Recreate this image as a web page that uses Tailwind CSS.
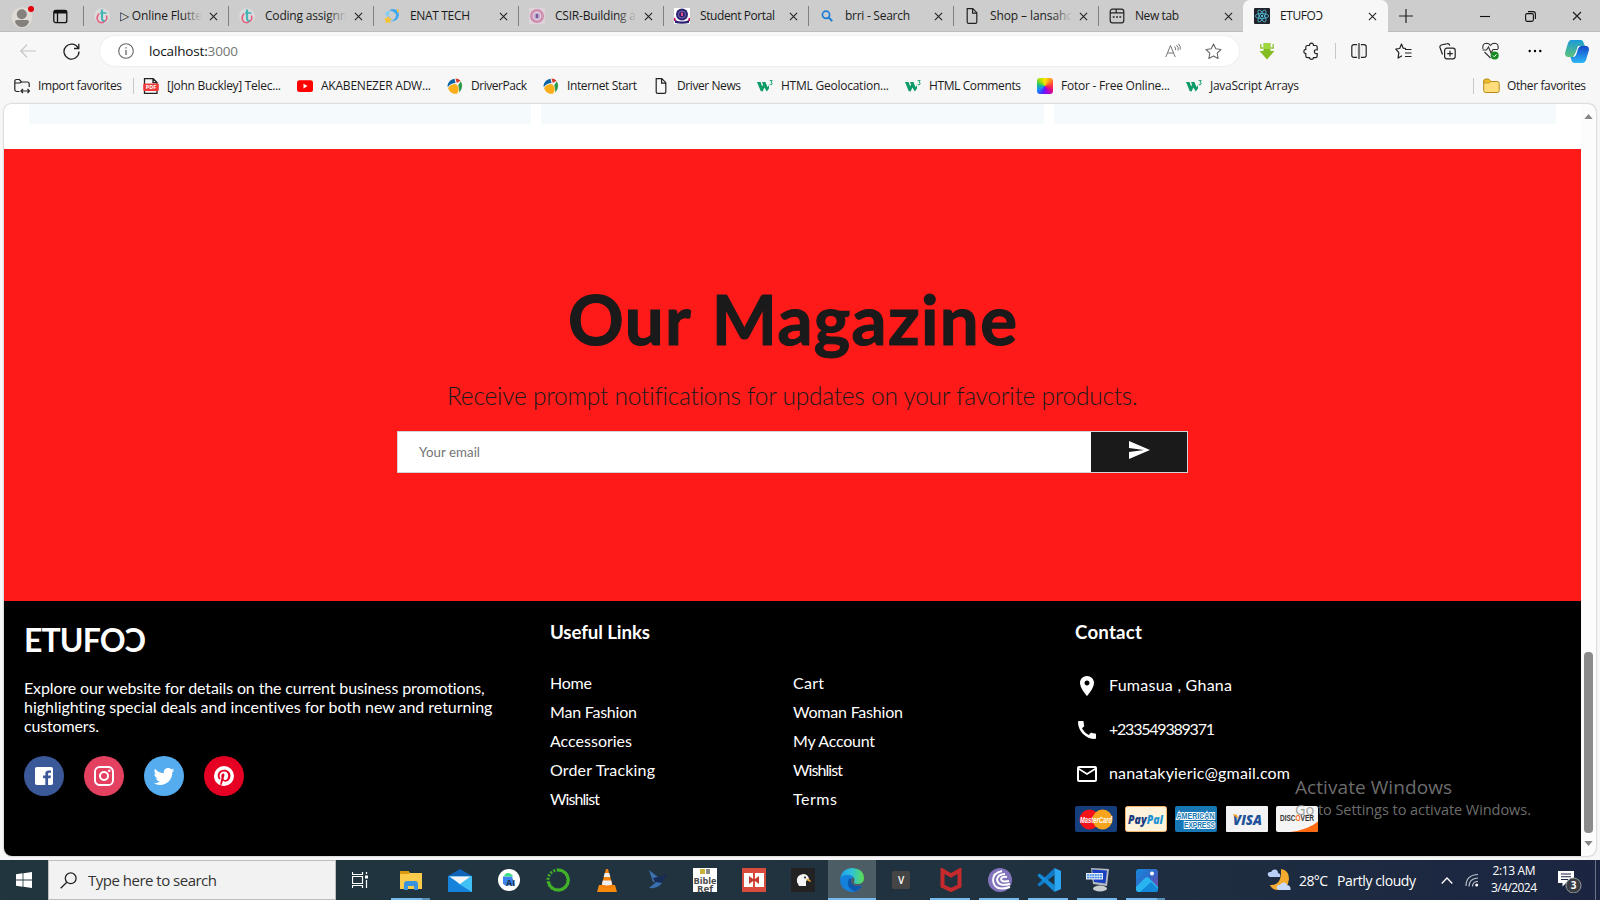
<!DOCTYPE html>
<html lang="en">
<head>
<meta charset="utf-8">
<title>ETUFOƆ</title>
<script src="https://cdn.jsdelivr.net/npm/@tailwindcss/browser@4"></script>
</head>
<body class="w-[1600px] h-[900px] overflow-hidden bg-[#f7f7f7] font-['Open_Sans','Noto_Sans',sans-serif] text-[12px] text-[#1b1b1b] flex flex-col relative">

<svg class="hidden">
  <symbol id="x" viewBox="0 0 10 10"><path d="M1 1l8 8M9 1l-8 8" stroke="#222" stroke-width="1.2" fill="none"/></symbol>
  <symbol id="page" viewBox="0 0 16 16"><path d="M3.2.7h5.6l4 4v9.2q0 1.4-1.4 1.4H4.6q-1.4 0-1.4-1.4zM8.6.9v4.2h4" stroke="#222" stroke-width="1.2" fill="none"/></symbol>
  <symbol id="t" viewBox="0 0 16 16"><circle cx="8" cy="8" r="7.8" fill="#dcdcdc"/><path d="M8 1.500v8.500q0 3.500 3 3" stroke="#45b5b5" stroke-width="2.200" fill="none"/><path d="M6 5h6.500" stroke="#45b5b5" stroke-width="1.600"/><path d="M5 5.500Q1 11 5.500 14.300q3 1 4.500-.6M12.300 7.500q1.600 4-1.600 6" stroke="#e2607f" stroke-width="1.600" fill="none"/></symbol>
  <symbol id="w3" viewBox="0 0 16 16"><path d="M0 4h3.600l1.500 4.500L6 6.500 5 4h3.400l2.200 5.200L12 7v3.500L9.800 13.500 7.400 9.500 5.600 13.500 3.700 13z" fill="#0a9b67"/><path d="M12.600 2.600h2.600l-1.200 1.800q1.600.3 1.100 1.700-.8 1.300-2.500.4" stroke="#0a9b67" stroke-width=".9" fill="none"/></symbol>
  <symbol id="ball" viewBox="0 0 16 16"><path d="M.5 7.500Q2 1.500 7.500.8l1 4.200Q4 5 .8 9z" fill="#0a64a4"/><path d="M8.500.5q3 0 5 2.300L9.800 5z" fill="#d8392b"/><path d="M13.800 3.300Q17 9 12.500 14.500L11.300 7z" fill="#2c9a4b"/><path d="M1 10Q5 5 9.500 6.200q3.500 4 1 9.300Q3.500 17 1 10z" fill="#f9ae1a"/></symbol>
</svg>

<!-- Tab strip -->
<div class="h-8 shrink-0 bg-[#cdcdcd] flex items-stretch shadow-[inset_0_-1px_0_#bdbdbd]">
  <div class="w-[83px] flex items-center pl-[11px] gap-[19px]">
    <svg class="w-[23px] h-[23px]" viewBox="0 0 23 23"><circle cx="11" cy="12.500" r="10.300" fill="#dedad4"/><circle cx="10.800" cy="9.300" r="5" fill="#85807b"/><path d="M4 17q0-2 2-2h10q2 0 2 2-2 5-7 5t-7-5z" fill="#85807b"/><circle cx="20" cy="4" r="3" fill="#e3000b"/></svg>
    <svg class="w-[15px] h-[15px]" viewBox="0 0 15 15"><rect x=".8" y="1.300" width="13" height="12.400" rx="2" fill="none" stroke="#111" stroke-width="1.300"/><path d="M1 3h13" stroke="#111" stroke-width="3"/><path d="M4.500 3v11" stroke="#111" stroke-width="1.300"/></svg>
  </div>
  <div class="w-[145px] flex items-center relative pl-[11px]"><i class="absolute left-0 top-[6px] w-px h-5 bg-[#808080]"></i>
    <svg class="w-4 h-4 shrink-0"><use href="#t"/></svg><div class="ml-[10px] w-[82px] overflow-hidden relative whitespace-nowrap"><span class="fit block w-[82px]">▷ Online Flutte</span><i class="absolute right-0 top-0 w-5 h-full bg-linear-to-r from-transparent to-[#cdcdcd]"></i></div><svg class="w-[9px] h-[9px] ml-[7px] shrink-0"><use href="#x"/></svg></div>
  <div class="w-[145px] flex items-center relative pl-[11px]"><i class="absolute left-0 top-[6px] w-px h-5 bg-[#808080]"></i>
    <svg class="w-4 h-4 shrink-0"><use href="#t"/></svg><div class="ml-[10px] w-[82px] overflow-hidden relative whitespace-nowrap"><span class="fit block w-[82px]">Coding assignn</span><i class="absolute right-0 top-0 w-5 h-full bg-linear-to-r from-transparent to-[#cdcdcd]"></i></div><svg class="w-[9px] h-[9px] ml-[7px] shrink-0"><use href="#x"/></svg></div>
  <div class="w-[145px] flex items-center relative pl-[11px]"><i class="absolute left-0 top-[6px] w-px h-5 bg-[#808080]"></i>
    <svg class="w-4 h-4 shrink-0" viewBox="0 0 16 16"><path d="M5 2.500q5-3 9 .5 2.500 5-1.500 9-4 2-6 1 4.500-1 5.500-5Q12.500 4 5 2.500z" fill="#3fa9ef"/><path d="M1 5q2-2.500 6-2.500Q4.500 5 5 8q2 4 6 4.500-7 1-10-7.500z" fill="#86cdf2"/><path d="M4 8l1.300 2.300 2.700.4-2 2 .5 2.700L4 14l-2.500 1.400.5-2.700-2-2 2.700-.4zM13 0l.7 1.700 1.800.3-1.300 1.200.3 1.800-1.500-1z" fill="#fbc02d"/></svg><div class="ml-[10px] w-[82px]"><span class="fit block w-[60px]">ENAT TECH</span></div><svg class="w-[9px] h-[9px] ml-[7px] shrink-0"><use href="#x"/></svg></div>
  <div class="w-[145px] flex items-center relative pl-[11px]"><i class="absolute left-0 top-[6px] w-px h-5 bg-[#808080]"></i>
    <svg class="w-4 h-4 shrink-0" viewBox="0 0 16 16"><path d="M0 0h16v16H0z" fill="#dfd3da"/><circle cx="8" cy="8" r="5.700" fill="none" stroke="#cf8db2" stroke-width="2.600"/><circle cx="8" cy="8" r="3" fill="#b9a0c8"/><path d="M7 6h2v4H7z" fill="#7c5a9a"/></svg><div class="ml-[10px] w-[82px] overflow-hidden relative whitespace-nowrap"><span class="fit block w-[81px]">CSIR-Building a</span><i class="absolute right-0 top-0 w-5 h-full bg-linear-to-r from-transparent to-[#cdcdcd]"></i></div><svg class="w-[9px] h-[9px] ml-[7px] shrink-0"><use href="#x"/></svg></div>
  <div class="w-[145px] flex items-center relative pl-[11px]"><i class="absolute left-0 top-[6px] w-px h-5 bg-[#808080]"></i>
    <svg class="w-4 h-4 shrink-0" viewBox="0 0 16 16"><path d="M0 0h16v16H0z" fill="#fff"/><circle cx="8" cy="6.500" r="6" fill="#2d2172"/><circle cx="8" cy="6.500" r="3.600" fill="none" stroke="#8a7fc0" stroke-width=".8"/><path d="M7 4.500h2v3.500H7z" fill="#e7528b"/><path d="M1 12q7 3 14 0v3q-7 1.500-14 0z" fill="#2d2172"/><path d="M0 9.500l2 1.500-1 2H0zM16 9.500L14 11l1 2h1z" fill="#d4006a"/></svg><div class="ml-[10px] w-[82px]"><span class="fit block w-[75px]">Student Portal</span></div><svg class="w-[9px] h-[9px] ml-[7px] shrink-0"><use href="#x"/></svg></div>
  <div class="w-[145px] flex items-center relative pl-[11px]"><i class="absolute left-0 top-[6px] w-px h-5 bg-[#808080]"></i>
    <svg class="w-4 h-4 shrink-0" viewBox="0 0 16 16"><circle cx="7" cy="6.800" r="3.600" fill="none" stroke="#1b7cd6" stroke-width="1.700"/><path d="M9.600 9.400l3.600 3.700" stroke="#1b7cd6" stroke-width="2"/></svg><div class="ml-[10px] w-[82px]"><span class="fit block w-[65px]">brri - Search</span></div><svg class="w-[9px] h-[9px] ml-[7px] shrink-0"><use href="#x"/></svg></div>
  <div class="w-[145px] flex items-center relative pl-[11px]"><i class="absolute left-0 top-[6px] w-px h-5 bg-[#808080]"></i>
    <svg class="w-4 h-4 shrink-0"><use href="#page"/></svg><div class="ml-[10px] w-[82px] overflow-hidden relative whitespace-nowrap"><span class="fit block w-[82px]">Shop – lansahc</span><i class="absolute right-0 top-0 w-5 h-full bg-linear-to-r from-transparent to-[#cdcdcd]"></i></div><svg class="w-[9px] h-[9px] ml-[7px] shrink-0"><use href="#x"/></svg></div>
  <div class="w-[145px] flex items-center relative pl-[11px]"><i class="absolute left-0 top-[6px] w-px h-5 bg-[#808080]"></i>
    <svg class="w-4 h-4 shrink-0" viewBox="0 0 16 16"><path d="M1.200 12.400V3.600Q1.200 1.200 3.600 1.200h8.800q2.400 0 2.400 2.400v8.800q0 2.400-2.400 2.400H3.600q-2.400 0-2.400-2.400zM1.200 4.800h5Q7.200 4.800 7.200 3.500V1.200M7.200 4.800h7.600" fill="none" stroke="#222" stroke-width="1.200"/><path d="M3.800 9h1.800M7.100 9h1.800M10.400 9h1.800" stroke="#222" stroke-width="1.600"/></svg><div class="ml-[10px] w-[82px]"><span class="fit block w-[44px]">New tab</span></div><svg class="w-[9px] h-[9px] ml-[7px] shrink-0"><use href="#x"/></svg></div>
  <div class="w-[145px] flex items-center bg-[#f7f7f7] rounded-t-[7px] pl-[11px]">
    <svg class="w-4 h-4 shrink-0" viewBox="0 0 16 16"><rect width="16" height="16" rx="1" fill="#20232a"/><g fill="none" stroke="#53c1de" stroke-width=".8"><ellipse cx="8" cy="8" rx="6.700" ry="2.500"/><ellipse cx="8" cy="8" rx="6.700" ry="2.500" transform="rotate(60 8 8)"/><ellipse cx="8" cy="8" rx="6.700" ry="2.500" transform="rotate(120 8 8)"/></g><circle cx="8" cy="8" r="1.200" fill="#53c1de"/></svg><div class="ml-[10px] w-[82px]"><span class="fit block w-[43px]">ETUFOƆ</span></div><svg class="w-[9px] h-[9px] ml-[6px] shrink-0"><use href="#x"/></svg></div>
  <div class="flex-1 flex items-center pl-[11px]">
    <svg class="w-[14px] h-[14px]" viewBox="0 0 14 14"><path d="M7 0v14M0 7h14" stroke="#222" stroke-width="1.200"/></svg>
    <svg class="w-[10px] h-[10px] ml-[67px]" viewBox="0 0 10 10"><path d="M0 5.500h10" stroke="#111" stroke-width="1.100"/></svg>
    <svg class="w-[11px] h-[11px] ml-[35px]" viewBox="0 0 11 11"><rect x=".6" y="2.600" width="7.800" height="7.800" rx="1.600" fill="none" stroke="#111" stroke-width="1.100"/><path d="M3 .6h5q2.400 0 2.400 2.400v5" fill="none" stroke="#111" stroke-width="1.100"/></svg>
    <svg class="w-[10px] h-[10px] ml-[36px]"><use href="#x"/></svg>
  </div>
</div>

<!-- Address bar -->
<div class="h-[38px] shrink-0 flex items-center">
  <svg class="w-4 h-[14px] ml-5" viewBox="0 0 16 14"><path d="M7 .7L.8 7 7 13.300M.8 7H16" fill="none" stroke="#c3c3c3" stroke-width="1.200"/></svg>
  <svg class="w-[17px] h-[17px] ml-[27px]" viewBox="0 0 17 17"><path d="M15.300 5.400A7.500 7.500 0 1 0 16 8.500M15.800.8v4.700H11" fill="none" stroke="#222" stroke-width="1.300"/></svg>
  <div class="ml-5 w-[1139px] h-[30px] rounded-full bg-white flex items-center shadow-[0_0_2px_#ddd]">
    <svg class="w-4 h-4 ml-[18px]" viewBox="0 0 16 16"><circle cx="8" cy="8" r="7.300" fill="none" stroke="#666" stroke-width="1.100"/><path d="M8 7v5M8 4.200v1.400" stroke="#666" stroke-width="1.300"/></svg>
    <span class="fit block w-[89px] ml-[15px] text-[13.500px] text-[#111]">localhost:<b class="font-normal text-[#767676]">3000</b></span>
    <svg class="w-4 h-4 ml-auto" viewBox="0 0 16 16"><path d="M.8 14L5.500 2.500 10.200 14M2.400 10h6.200M9.500 3.500q1.500 1.500 1 3.500M11.500 2q2.500 2.500 1.500 5.500M13.500.7q2.500 3 1.700 6" fill="none" stroke="#767676" stroke-width="1"/></svg>
    <svg class="w-[17px] h-[17px] ml-[24px] mr-[17px]" viewBox="0 0 17 17"><path d="M8.500 1l2.300 4.800 5.200.7-3.800 3.700.9 5.300-4.600-2.500-4.600 2.500.9-5.300L1 6.500l5.200-.7z" fill="none" stroke="#6a6a6a" stroke-width="1.100" stroke-linejoin="round"/></svg>
  </div>
  <svg class="w-4 h-[18px] ml-5" viewBox="0 0 16 18"><path d="M4.500 1h7v8h4L8 17.500.5 9h4z" fill="#84bd22"/><path d="M5 1h6v6H5z" fill="#9fd63c"/><path d="M1.800 2v4h2.500M14.200 2v4h-2.500" fill="none" stroke="#8bc52e" stroke-width="1.300"/></svg>
  <svg class="w-4 h-[18px] ml-[28px]" viewBox="0 0 16 18"><path d="M4.500 3.500h2Q6.300 1.200 8.500 1.200t2 2.300h2q1.700 0 1.700 1.700v2.600q-2.800-.4-2.800 1.900t2.800 1.900V14q0 1.600-1.700 1.600h-2Q10.300 17.300 8.500 17.300T6.500 15.600h-2Q2.800 15.600 2.800 14v-2.400Q.8 11.400.8 9.500t2-2.100V5.200q0-1.700 1.700-1.700z" fill="none" stroke="#222" stroke-width="1.200"/></svg>
  <i class="w-px h-4 bg-[#c8c8c8] ml-4"></i>
  <svg class="w-4 h-4 ml-[15px]" viewBox="0 0 16 16"><path d="M5.500 1.700H3Q.8 1.700.8 3.800v8.400q0 2.100 2.200 2.100h2.500M10.500 1.700H13q2.200 0 2.200 2.100v8.400q0 2.100-2.200 2.100h-2.500M5.500 1.100v13.800M10.500 1.100v13.800" fill="none" stroke="#222" stroke-width="1.200"/><path d="M4.800 2.300h1.400v11.400H4.800zM9.800 2.300h1.400v11.400H9.800z" fill="#f7f7f7"/><path d="M8 0v16" stroke="#222" stroke-width="1.200"/></svg>
  <svg class="w-[17px] h-[17px] ml-[28px]" viewBox="0 0 17 17"><path d="M11 5.500l-2.800-.3L6.500 1 4.700 5.500.8 6l3 3.700-.7 5.400L7 12.800M10 6.500h6.500M10 10h6.500M10 13.500h6.500" fill="none" stroke="#222" stroke-width="1.200" stroke-linejoin="round"/></svg>
  <svg class="w-[17px] h-[17px] ml-[27px]" viewBox="0 0 17 17"><rect x="5.600" y="5.200" width="10.600" height="10.600" rx="2.200" fill="none" stroke="#222" stroke-width="1.200"/><path d="M3.500 11.500L1 4.500Q.5 2.700 2.200 2l6-1.300q2-.5 2.500 2M11 7.800v5.600M8.200 10.600h5.600" fill="none" stroke="#222" stroke-width="1.200"/></svg>
  <svg class="w-[17px] h-[18px] ml-[26px]" viewBox="0 0 17 18"><path d="M1 7Q0 1.500 4.500 1.300 7 1.300 8.500 3.500 10 1.300 12.500 1.300 17 1.500 16 7M2.500 10l6 6M.5 8h4L6.500 5l2.500 6 2-3.500h5" fill="none" stroke="#333" stroke-width="1.100"/><circle cx="12.700" cy="13.500" r="4" fill="#168a22"/><path d="M11 13.500l1.300 1.300 2.200-2.500" stroke="#fff" fill="none"/></svg>
  <svg class="w-[14px] h-4 ml-[29px]" viewBox="0 0 14 16"><circle cx="1.700" cy="8" r="1.200"/><circle cx="7" cy="8" r="1.200"/><circle cx="12.300" cy="8" r="1.200"/></svg>
  <svg class="w-[24px] h-[23px] ml-[23px]" viewBox="0 0 24 23"><defs><linearGradient id="ca" x2="0" y2="1"><stop stop-color="#1b9bd8"/><stop offset="1" stop-color="#5cc27a"/></linearGradient><linearGradient id="cb" x2="0" y2="1"><stop stop-color="#1447c9"/><stop offset="1" stop-color="#2db8f5"/></linearGradient></defs><path d="M6 0h10q2 0 2.700 3L20 6h-4q-2 0-3 3l-2 6q-1 2-3 2H3q-3 0-3-4L3 3q1-3 3-3z" fill="url(#ca)"/><path d="M18 23H9q-2 0-2.700-3L5.500 17H8q2 0 3-3l2-6q1-2 3-2h5q3 0 3 4l-3 10q-1 3-3 3z" fill="url(#cb)"/><path d="M13 6h3q-2 0-3 3l-2 6q-1 2-3 2 2.500-3 5-11z" fill="#fff"/></svg>
</div>

<!-- Favorites bar -->
<div class="h-[34px] shrink-0 flex items-center pl-[14px] pr-[14px] whitespace-nowrap pb-[2px]">
  <svg class="w-4 h-4" viewBox="0 0 16 16"><path d="M5.500 13.500H3Q.8 13.500.8 11.300V3.500q0-2 2-2h2.500L7.500 4h5.700q2 0 2 2v3M.8 5h5L7.500 4M9 11l-2 2 2 2M13.500 11l2 2-2 2M7 13h8.500" fill="none" stroke="#222" stroke-width="1.200"/></svg>
  <span class="fit block w-[84px] ml-2">Import favorites</span>
  <i class="w-px h-4 bg-[#c8c8c8] ml-[11px] mr-[9px]"></i>
  <div class="flex items-center gap-4">
    <div class="flex items-center gap-2"><svg class="w-4 h-4" viewBox="0 0 16 16"><path d="M1.500 6V.7h8.700L14 4.500V6M1.500 13v2.300h12.500V13M10 .7v4h4" fill="none" stroke="#222" stroke-width="1.300"/><rect x=".2" y="5.500" width="15.600" height="7.500" rx="1" fill="#f03b3b"/><text x="8" y="11.300" font-size="5.500" font-weight="700" fill="#fff" text-anchor="middle">PDF</text></svg><span class="fit block w-[114px]">[John Buckley] Telec...</span></div>
    <div class="flex items-center gap-2"><svg class="w-4 h-4" viewBox="0 0 16 16"><rect y="2.300" width="16" height="11.600" rx="2.500" fill="#f00"/><path d="M6.500 5.800v4.600l4-2.300z" fill="#fff"/></svg><span class="fit block w-[110px]">AKABENEZER ADW...</span></div>
    <div class="flex items-center gap-2"><svg class="w-4 h-4"><use href="#ball"/></svg><span class="fit block w-[56px]">DriverPack</span></div>
    <div class="flex items-center gap-2"><svg class="w-4 h-4"><use href="#ball"/></svg><span class="fit block w-[70px]">Internet Start</span></div>
    <div class="flex items-center gap-2"><svg class="w-4 h-4"><use href="#page"/></svg><span class="fit block w-[64px]">Driver News</span></div>
    <div class="flex items-center gap-2"><svg class="w-4 h-4"><use href="#w3"/></svg><span class="fit block w-[108px]">HTML Geolocation...</span></div>
    <div class="flex items-center gap-2"><svg class="w-4 h-4"><use href="#w3"/></svg><span class="fit block w-[92px]">HTML Comments</span></div>
    <div class="flex items-center gap-2"><i class="w-4 h-4 rounded-[3px] bg-[conic-gradient(#ffe600,#ff9a1f,#ff3d3d,#e0107a,#a100e0,#4b28ff,#1a8cff,#19c37d,#a8e000,#ffe600)]"></i><span class="fit block w-[109px]">Fotor - Free Online...</span></div>
    <div class="flex items-center gap-2"><svg class="w-4 h-4"><use href="#w3"/></svg><span class="fit block w-[89px]">JavaScript Arrays</span></div>
  </div>
  <i class="w-px h-4 bg-[#c8c8c8] ml-auto mr-[9px]"></i>
  <svg class="w-[17px] h-4" viewBox="0 0 17 16"><path d="M.7 4V3Q.7 1.200 2.500 1.200h3L7.500 3.500h6.700q2 0 2 2v7q0 2-2 2H2.700q-2 0-2-2z" fill="#ffdc7c" stroke="#b58a12"/><path d="M1 5h5l2-1.700-2-2H2.500Q1 1.300 1 3z" fill="#f4bd2f" stroke="#b58a12" stroke-width=".7"/></svg>
  <span class="fit block w-[79px] ml-[7px]">Other favorites</span>
</div>

<!-- Web page -->
<div class="ml-1 w-[1592px] h-[752px] shrink-0 rounded-[8px] overflow-hidden bg-[#fcfcfc] flex shadow-[0_0_2px_#999] relative font-['Lato',sans-serif]">
  <div class="w-[1577px] flex flex-col bg-white">
    <div class="h-[45px] pl-[25px] flex gap-[10px]">
      <div class="w-[502px] h-5 bg-[#f5fafd]"></div><div class="w-[503px] h-5 bg-[#f5fafd]"></div><div class="w-[502px] h-5 bg-[#f5fafd]"></div>
    </div>
    <div class="h-[452px] bg-[#ff1a1a] flex flex-col items-center justify-start text-[#1a1a1a]">
      <h1 class="fit w-[449px] mt-[128px] h-[84px] leading-[84px] text-[69px] font-bold whitespace-nowrap [word-spacing:3px] [-webkit-text-stroke:1.200px_#1a1a1a]">Our Magazine</h1>
      <p class="fit w-[691px] mt-[20px] h-[29px] leading-[29px] text-[24.500px] font-light whitespace-nowrap">Receive prompt notifications for updates on your favorite products.</p>
      <div class="w-[791px] h-[42px] mt-[21px] border border-[#d3d3d3] bg-white flex">
        <div class="flex-1 flex items-center pl-[21px] pt-[2px]"><span class="fit block w-[61px] text-[13.300px] text-[#757575]">Your email</span></div>
        <div class="w-[96px] bg-[#1a1a1a] flex items-center justify-center"><svg class="w-6 h-6 -mt-1" viewBox="0 0 24 24" fill="#fff"><path d="M2.010 21L23 12 2.010 3 2 10l15 2-15 2z"/></svg></div>
      </div>
    </div>
    <div class="h-[255px] bg-black text-white flex pl-5 text-[16px]">
      <div class="w-[526px]">
        <h2 class="fit w-[122px] mt-[19px] h-[39px] leading-[40px] text-[32px] font-bold whitespace-nowrap">ETUFOƆ</h2>
        <div class="mt-[19px] leading-[19px] whitespace-nowrap">
          <span class="fit block w-[461px]">Explore our website for details on the current business promotions,</span>
          <span class="fit block w-[469px]">highlighting special deals and incentives for both new and returning</span>
          <span class="fit block w-[75px]">customers.</span>
        </div>
        <div class="flex gap-5 mt-[21px]">
          <div class="w-10 h-10 rounded-full bg-[#3b5999] flex items-center justify-center"><svg class="w-6 h-6" viewBox="0 0 24 24" fill="#fff"><path d="M22 4v16q0 2-2 2h-3.500v-7.500h2.800l.4-3h-3.200V9.800q0-1.300 1.500-1.300h1.800V5.800h-2.600q-3.700 0-3.700 3.400v2.300h-2.500v3h2.500V22H4q-2 0-2-2V4q0-2 2-2h16q2 0 2 2z" transform="translate(1.200 1.200) scale(.9)"/></svg></div>
          <div class="w-10 h-10 rounded-full bg-[#e4405f] flex items-center justify-center"><svg class="w-6 h-6" viewBox="0 0 24 24" fill="#fff"><path d="M7.800 2h8.400C19.400 2 22 4.600 22 7.800v8.400a5.800 5.800 0 0 1-5.800 5.800H7.800C4.600 22 2 19.400 2 16.200V7.800A5.800 5.800 0 0 1 7.800 2m-.2 2A3.600 3.600 0 0 0 4 7.600v8.800C4 18.390 5.610 20 7.600 20h8.800a3.600 3.600 0 0 0 3.600-3.600V7.600C20 5.610 18.390 4 16.400 4H7.600m9.650 1.500a1.250 1.250 0 0 1 0 2.500 1.250 1.250 0 0 1 0-2.500M12 7a5 5 0 0 1 0 10 5 5 0 0 1 0-10m0 2a3 3 0 0 0 0 6 3 3 0 0 0 0-6z"/></svg></div>
          <div class="w-10 h-10 rounded-full bg-[#55acee] flex items-center justify-center"><svg class="w-6 h-6" viewBox="0 0 24 24" fill="#fff"><path d="M22.460 6c-.77.350-1.600.580-2.460.690.880-.530 1.560-1.370 1.880-2.380-.830.500-1.750.850-2.720 1.050C18.370 4.500 17.260 4 16 4c-2.350 0-4.270 1.920-4.270 4.290 0 .340.040.670.110.980C8.280 9.090 5.110 7.380 3 4.790c-.370.630-.580 1.370-.580 2.150 0 1.490.750 2.810 1.910 3.560-.710 0-1.370-.200-1.950-.500v.030c0 2.080 1.480 3.820 3.440 4.210a4.220 4.220 0 0 1-1.930.070 4.280 4.280 0 0 0 4 2.980 8.521 8.521 0 0 1-5.330 1.840c-.340 0-.680-.020-1.020-.060C3.440 20.290 5.700 21 8.120 21 16 21 20.330 14.460 20.330 8.790c0-.190 0-.370-.010-.560.840-.600 1.560-1.360 2.140-2.230z"/></svg></div>
          <div class="w-10 h-10 rounded-full bg-[#e60023] flex items-center justify-center"><svg class="w-6 h-6" viewBox="0 0 24 24" fill="#fff"><path d="M9.040 21.540c.960.290 1.930.460 2.960.460a10 10 0 0 0 10-10A10 10 0 0 0 12 2 10 10 0 0 0 2 12c0 4.250 2.670 7.900 6.440 9.340-.090-.780-.180-2.070 0-2.960l1.150-4.940s-.290-.580-.290-1.500c0-1.380.860-2.410 1.840-2.410.860 0 1.260.630 1.260 1.440 0 .860-.570 2.090-.860 3.270-.170.980.520 1.840 1.520 1.840 1.780 0 3.160-1.900 3.160-4.580 0-2.400-1.720-4.040-4.190-4.040-2.820 0-4.480 2.100-4.480 4.310 0 .860.280 1.730.740 2.300.090.060.090.140.060.290l-.290 1.090c0 .170-.110.230-.280.110-1.280-.560-2.020-2.380-2.020-3.850 0-3.160 2.240-6.030 6.560-6.030 3.440 0 6.120 2.470 6.120 5.750 0 3.440-2.130 6.200-5.180 6.200-.970 0-1.920-.520-2.260-1.130l-.670 2.370c-.230.860-.860 2.010-1.290 2.700v-.030z"/></svg></div>
        </div>
      </div>
      <div class="w-[525px]">
        <h3 class="fit w-[100px] mt-[19px] h-6 leading-6 text-[18.700px] font-bold whitespace-nowrap">Useful Links</h3>
        <div class="grid grid-cols-[243px_243px] mt-[24px] leading-[29px] whitespace-nowrap">
          <a class="fit w-[42px]">Home</a><a class="fit w-[31px]">Cart</a>
          <a class="fit w-[87px]">Man Fashion</a><a class="fit w-[110px]">Woman Fashion</a>
          <a class="fit w-[82px]">Accessories</a><a class="fit w-[82px]">My Account</a>
          <a class="fit w-[105px]">Order Tracking</a><a class="fit w-[50px]">Wishlist</a>
          <a class="fit w-[50px]">Wishlist</a><a class="fit w-[44px]">Terms</a>
        </div>
      </div>
      <div class="flex-1">
        <h3 class="fit w-[67px] mt-[19px] h-6 leading-6 text-[18.700px] font-bold whitespace-nowrap">Contact</h3>
        <div class="mt-[30px] flex flex-col gap-5 whitespace-nowrap">
          <div class="flex items-center h-6 gap-[10px]"><svg class="w-6 h-6" viewBox="0 0 24 24" fill="#fff"><path d="M12 2C8.130 2 5 5.130 5 9c0 5.250 7 13 7 13s7-7.750 7-13c0-3.870-3.130-7-7-7zm0 9.500c-1.380 0-2.500-1.120-2.500-2.500s1.120-2.500 2.500-2.500 2.500 1.120 2.500 2.500-1.120 2.500-2.500 2.500z"/></svg><span class="fit block w-[123px] -mt-[2px]">Fumasua , Ghana</span></div>
          <div class="flex items-center h-6 gap-[10px]"><svg class="w-6 h-6" viewBox="0 0 24 24" fill="#fff"><path d="M20.010 15.380c-1.230 0-2.420-.200-3.530-.560-.350-.120-.740-.030-1.010.240l-1.570 1.970c-2.830-1.350-5.480-3.900-6.890-6.830l1.950-1.660c.270-.280.350-.670.240-1.020-.370-1.110-.560-2.300-.560-3.530 0-.540-.450-.990-.990-.990H4.190C3.650 3 3 3.240 3 3.990 3 13.280 10.730 21 20.010 21c.710 0 .990-.630.990-1.180v-3.450c0-.540-.450-.990-.990-.990z"/></svg><span class="fit block w-[106px] -mt-[2px]">+233549389371</span></div>
          <div class="flex items-center h-6 gap-[10px]"><svg class="w-6 h-6" viewBox="0 0 24 24" fill="#fff"><path d="M22 6c0-1.100-.900-2-2-2H4c-1.100 0-2 .900-2 2v12c0 1.100.900 2 2 2h16c1.100 0 2-.900 2-2V6zm-2 0l-8 5-8-5h16zm0 12H4V8l8 5 8-5v10z"/></svg><span class="fit block w-[181px] -mt-[2px]">nanatakyieric@gmail.com</span></div>
        </div>
        <div class="flex gap-[8.200px] mt-[20px]">
          <svg class="w-[42px] h-[26px]" viewBox="0 0 42 26"><rect width="42" height="26" rx="2" fill="#143f7c"/><circle cx="14.500" cy="13.500" r="10" fill="#f3131a"/><circle cx="27.500" cy="13.500" r="10" fill="#f7a41d"/><text x="5" y="17" font-family="Liberation Sans" font-size="9" font-weight="700" font-style="italic" fill="#fff" textLength="32" lengthAdjust="spacingAndGlyphs">MasterCard</text></svg>
          <svg class="w-[42px] h-[26px]" viewBox="0 0 42 26"><rect x=".5" y=".5" width="41" height="25" rx="2" fill="#fff3dc" stroke="#f2b66c"/><text x="3" y="17.500" font-family="Open Sans" font-size="12" font-weight="800" font-style="italic" fill="#1b3d80" textLength="35" lengthAdjust="spacingAndGlyphs">Pay<tspan fill="#1f94d2">Pal</tspan></text></svg>
          <svg class="w-[42px] h-[26px]" viewBox="0 0 42 26"><rect width="42" height="26" rx="2" fill="#1778b5"/><g font-family="Liberation Sans" font-size="9" font-weight="700" fill="#1778b5" stroke="#fff" stroke-width="2" paint-order="stroke"><text x="1.500" y="12.500" textLength="38" lengthAdjust="spacingAndGlyphs">AMERICAN</text><text x="9" y="22" textLength="31" lengthAdjust="spacingAndGlyphs">EXPRESS</text></g></svg>
          <svg class="w-[42px] h-[26px]" viewBox="0 0 42 26"><rect width="42" height="26" rx="1" fill="#f3f3f5"/><text x="7" y="18.500" font-family="Open Sans" font-size="14" font-weight="800" font-style="italic" fill="#1d5198" textLength="29" lengthAdjust="spacingAndGlyphs">VISA</text><path d="M6.500 8.500h4l2 4.500z" fill="#f0a01e"/></svg>
          <svg class="w-[42px] h-[26px]" viewBox="0 0 42 26"><rect width="42" height="26" rx="2" fill="#f5f5f5"/><path d="M42 15.500V24q0 2-2 2H14q18-2 28-10.500z" fill="#ff6a10"/><text x="4" y="14.800" font-family="Liberation Sans" font-size="8.500" font-weight="700" fill="#333" textLength="34" lengthAdjust="spacingAndGlyphs">DISC<tspan fill="#ff6a10">O</tspan>VER</text></svg>
        </div>
      </div>
    </div>
  </div>
  <div class="flex-1 relative">
    <svg class="absolute left-[3px] top-[10px] w-[9px] h-[5px]" viewBox="0 0 10 6"><path d="M5 0l5 6H0z" fill="#858585"/></svg>
    <i class="absolute left-[3px] top-[548px] w-[9px] h-[181px] rounded-[4px] bg-[#8b8b8b]"></i>
    <svg class="absolute left-[3px] top-[737px] w-[9px] h-[5px]" viewBox="0 0 10 6"><path d="M0 0h10L5 6z" fill="#858585"/></svg>
  </div>
</div>

<!-- Activation watermark -->
<div class="absolute left-[1295px] top-[773px] text-[#8a8a8a]/80 whitespace-nowrap">
  <div class="fit w-[157px] text-[19px] leading-[28px]">Activate Windows</div>
  <div class="fit w-[236px] text-[14.500px] leading-[18px]">Go to Settings to activate Windows.</div>
</div>

<!-- Taskbar -->
<div class="mt-1 h-10 shrink-0 bg-linear-to-r from-[#20353e] via-[#20323f] via-60% to-[#1b2541] flex text-white">
  <div class="w-12 flex items-center justify-center"><svg class="w-4 h-4" viewBox="0 0 16 16" fill="#fff"><path d="M0 2.200l6.600-.9v6.300H0zM7.400 1.200L16 0v7.600H7.400zM0 8.400h6.600v6.300L0 13.800zM7.400 8.400H16V16l-8.600-1.200z"/></svg></div>
  <div class="w-[288px] bg-[#f2f2f2] border border-[#bdbdbd] flex items-center pl-[11px]"><svg class="w-[17px] h-[17px]" viewBox="0 0 17 17"><circle cx="10.700" cy="6.300" r="5.400" fill="none" stroke="#222" stroke-width="1.300"/><path d="M6.800 10.200L.7 16.300" stroke="#222" stroke-width="1.300"/></svg><span class="fit block w-[129px] ml-[11px] text-[15px] text-[#333]">Type here to search</span></div>
  <div class="w-[48px] flex items-center justify-center"><svg class="w-4 h-4" viewBox="0 0 16 16"><path d="M.5 0v2.500h10V0M.5 16v-2.500h10V16M.5 4.500h10v7H.5zM14.500 0v2M14.500 8v8" fill="none" stroke="#fff" stroke-width="1.200"/><path d="M13 3.500h3v3h-3z" fill="#fff"/></svg></div>
  <div class="w-[54px] flex items-center justify-center relative"><svg class="w-[22px] h-[19px]" viewBox="0 0 22 19"><path d="M0 1.500Q0 0 1.500 0H8l2 2H22v16H0z" fill="#fbcb4b"/><path d="M0 0h9v3H0z" fill="#d99a10"/><path d="M4 19v-6q0-3 3-3h8q3 0 3 3v6h-4v-4H8v4z" fill="#3a93dd"/></svg><i class="absolute bottom-0 left-[7px] w-[31px] h-[2px] bg-[#76b9ed]"></i><i class="absolute bottom-0 left-[38px] w-2 h-[2px] bg-[#5a8cb4]"></i></div>
  <div class="w-[44px] flex items-center justify-center"><svg class="w-6 h-[23px]" viewBox="0 0 24 23"><path d="M0 7l12-7 12 7z" fill="#0f64b8"/><path d="M0 7h24v16H0z" fill="#2a9fe8"/><path d="M0 7l24 16H0z" fill="#1583dc"/><path d="M24 7v16L9.500 14z" fill="#41c0f6"/><path d="M1.500 7.500h21L12 15z" fill="#f4f4f4"/></svg></div>
  <div class="w-[55px] flex items-center justify-center pr-[2px]"><svg class="w-[22px] h-[22px]" viewBox="0 0 22 22"><circle cx="11" cy="11" r="11" fill="#fff"/><path d="M5 7.500h9l3 9H7l-2-2z" fill="#3c82ee"/><path d="M6 7.500q1-4 4.500-3.500t4.500 3.500z" fill="#3ddc84"/><text x="8" y="17" font-size="9" font-weight="700" fill="#17304f">AI</text></svg></div>
  <div class="w-[42px] flex items-center justify-center"><svg class="w-6 h-6" viewBox="0 0 24 24"><path d="M12 2a10 10 0 1 1-9.500 12" fill="none" stroke="#42b029" stroke-width="3"/><circle cx="12" cy="12" r="10" fill="none" stroke="#42b029" stroke-width="3" stroke-dasharray="2 1.500"/></svg></div>
  <div class="w-[57px] flex items-center justify-center pr-[2px]"><svg class="w-5 h-6" viewBox="0 0 20 24"><path d="M2 17h16l2 7H0z" fill="#f58a0c"/><path d="M9 1h2l5 18q-6 3-12 0z" fill="#f5810c"/><path d="M7.800 5h4.400l1.100 4H6.700zM5.800 12.500h8.400l1 4q-5.200 2-10.400 0z" fill="#eee"/></svg></div>
  <div class="w-[40px] flex items-center justify-center pl-[3px]"><svg class="w-[18px] h-5" viewBox="0 0 18 20"><path d="M0 0l9 7 2 4-7 1z" fill="#3c72b0"/><path d="M4 8l14-3-5 7-6 2z" fill="#182c58"/><path d="M0 18l7-6 6 1q-4 6-13 5z" fill="#3a6fb0"/></svg></div>
  <div class="w-[58px] flex items-center justify-center"><div class="w-6 h-6 bg-white text-[#444]"><svg class="w-6 h-6" viewBox="0 0 24 24"><path d="M7 1h5v5H7z" fill="#c9b23a"/><path d="M13 1h4v5h-4z" fill="#888"/><g font-size="9.500" font-weight="700" fill="#4a4a4a"><text x=".5" y="15.500" textLength="23" lengthAdjust="spacingAndGlyphs">Bible</text><text x="4" y="23.500" textLength="16" lengthAdjust="spacingAndGlyphs">Ref</text></g></svg></div></div>
  <div class="w-[40px] flex items-center justify-center"><svg class="w-6 h-6" viewBox="0 0 24 24"><path d="M0 0h24v24H0z" fill="#d84b3d"/><path d="M2 5h9v14H2zM13 5h9v14h-9z" fill="#fff"/><path d="M7 8l4 3h2l4-3v8l-4-3h-2l-4 3z" fill="#c23a2e"/></svg></div>
  <div class="w-[54px] flex items-center justify-center pl-1"><svg class="w-6 h-6" viewBox="0 0 24 24"><path d="M0 0h24v24H0z" fill="#222"/><path d="M6 14q-1-7 6-8 5 0 6 5l-3 2v5H8z" fill="#f5f5f5"/><path d="M15 11q4-1 5 3l-3-1z" fill="#e7a13a"/><circle cx="14" cy="9.500" r=".9"/></svg></div>
  <div class="w-[48px] flex items-center justify-center relative bg-[#4c5d66]"><svg class="w-6 h-6" viewBox="0 0 24 24"><defs><linearGradient id="ea"><stop stop-color="#1fa0e8"/><stop offset=".5" stop-color="#2fc3d8"/><stop offset="1" stop-color="#5ddf4e"/></linearGradient></defs><path d="M0 12Q1 4 8 6q5 1 5 4-4 1-2.500 5 2.500 5 11.500 2.500-3 6-9 6.500Q1 23.500 0 12z" fill="#1482dc"/><path d="M0 11Q2 0 12.500 0 24 1 24 10q0 6-7 6-3.500 0-3-1.700Q16 9 10 7 3 6 0 11z" fill="url(#ea)"/><path d="M9 10.500q-4 9 6 13Q19.500 22 22 17.500q-6 2-10-1.200-2-2.300-.5-5.300z" fill="#0d57ac"/></svg><i class="absolute bottom-0 inset-x-0 h-[2px] bg-[#76b9ed]"></i></div>
  <div class="w-[50px] flex items-center justify-center"><div class="w-[18px] h-[18px] bg-[#454545] rounded-[2px] text-[10px] font-semibold flex items-center justify-center">V</div></div>
  <div class="w-[49px] flex items-center justify-center relative"><svg class="w-[22px] h-6" viewBox="0 0 22 24"><path d="M2.500 2.500l8.500 5 8.500-5V18L11 22l-8.500-4z" fill="none" stroke="#c62a2c" stroke-width="4"/></svg><i class="absolute bottom-0 left-[4px] w-10 h-[2px] bg-[#76b9ed]"></i></div>
  <div class="w-[49px] flex items-center justify-center relative"><svg class="w-6 h-6" viewBox="0 0 24 24"><circle cx="12" cy="12" r="12" fill="#8274bc"/><path d="M22 19Q6 24 5 12 5 5 14 3M22 16Q10 19 9 11.500 10 6 17 6M21 13q-8 1.500-8-2 1-3 6-2" fill="none" stroke="#fff" stroke-width="1.900"/></svg><i class="absolute bottom-0 left-[4px] w-10 h-[2px] bg-[#76b9ed]"></i></div>
  <div class="w-[49px] flex items-center justify-center relative"><svg class="w-6 h-6" viewBox="0 0 24 24"><path d="M17.500 0v7L2.500 18.500.3 16.500z" fill="#0f7bc8"/><path d="M.3 7.500l2.200-2 15 11.500v7z" fill="#148bd8"/><path d="M17.500 0L24 3v18l-6.500 3z" fill="#2aa6f2"/></svg><i class="absolute bottom-0 left-[4px] w-10 h-[2px] bg-[#76b9ed]"></i></div>
  <div class="w-[49px] flex items-center justify-center relative"><svg class="w-6 h-6" viewBox="0 0 24 24"><path d="M5 0l18 1-2 17-14-2z" fill="#b8bcc0"/><path d="M6 1.500l15 1-1.500 13L8 14z" fill="#1a3fc0"/><path d="M0 5h17v6.500H0z" fill="#e4ecf6"/><path d="M1 7h15M1 9.500h15" stroke="#3a86e8" stroke-width="1.600" stroke-dasharray="2 .6"/><ellipse cx="14" cy="20.500" rx="7" ry="3" fill="#c9ccce"/></svg><i class="absolute bottom-0 left-[4px] w-10 h-[2px] bg-[#76b9ed]"></i></div>
  <div class="w-[49px] flex items-center justify-center relative"><svg class="w-[22px] h-[23px]" viewBox="0 0 22 23"><defs><linearGradient id="pa" x2="1" y2="1"><stop stop-color="#1689dc"/><stop offset=".5" stop-color="#3268c8"/><stop offset="1" stop-color="#8a3f9d"/></linearGradient></defs><rect width="22" height="23" rx="3" fill="url(#pa)"/><path d="M0 18l9-9q2-2 4 0l9 9v2q0 3-3 3H3q-3 0-3-3z" fill="#27b4ef"/><path d="M4 23l11-10 7 7q0 3-3 3z" fill="#1387d8"/><circle cx="16" cy="4.500" r="2" fill="#fff"/></svg><i class="absolute bottom-0 left-[4px] w-[31px] h-[2px] bg-[#76b9ed]"></i><i class="absolute bottom-0 left-[35px] w-2 h-[2px] bg-[#5a8cb4]"></i></div>
  <div class="flex-1 flex items-center text-[14px] pl-[96px] whitespace-nowrap">
    <svg class="w-6 h-6" viewBox="0 0 24 24"><path d="M14 1q8 1 8 10-1 11-11 11-6 0-8-5 12 1 11-16z" fill="#f5ab2e"/><path d="M3 9q-3-1-2-4 1-1.500 3-1 1-3 4.500-2.500Q11 2 11 5q3 .5 2 4z" fill="#b9cff5"/><path d="M12 22q-3-1-2-4 1-1.500 3-1 1-3 4.500-2.500Q20 15 20 17q4 .5 3.500 5z" fill="#c9daf8"/></svg>
    <span class="fit block w-[29px] ml-[8px]">28°C</span><span class="fit block w-[79px] ml-[9px]">Partly cloudy</span>
    <svg class="w-3 h-[7px] ml-[25px]" viewBox="0 0 12 7"><path d="M.7 6.500L6 1l5.300 5.500" fill="none" stroke="#fff" stroke-width="1.300"/></svg>
    <svg class="w-[14px] h-[14px] ml-[12px]" viewBox="0 0 14 14"><path d="M1 13Q1 2 13 1.500M4 13.500q0-8 9-8.500M7.500 13.500q0-5 5.500-5" fill="none" stroke="#b9c0cb" stroke-width="1.200"/><circle cx="11.700" cy="12" r="1.500" fill="#fff"/></svg>
    <div class="ml-[12px] w-[46px] text-[12px] leading-[17.500px] flex flex-col items-center pb-[2px]"><span class="fit block w-[43px]">2:13 AM</span><span class="fit block w-[46px]">3/4/2024</span></div>
    <svg class="w-[26px] h-[26px] ml-[20px]" viewBox="0 0 26 26"><path d="M1 4h16v12H9l-3.500 3.500V16H1z" fill="#fff"/><path d="M4 7h10M4 9.700h10M4 12.500h7" stroke="#1d2742" stroke-width="1.100"/><circle cx="16.500" cy="18.500" r="7.500" fill="#3a3d44" stroke="#999" stroke-width="1"/><text x="16.500" y="22.200" font-size="10" font-weight="700" fill="#fff" text-anchor="middle">3</text></svg>
    <i class="w-px h-10 bg-[#6a7285] ml-auto mr-[4px]"></i>
  </div>
</div>

<script>
// Spread each label's letters evenly over the width its class declares.
document.fonts.ready.then(function () {
  document.querySelectorAll('.fit').forEach(function (el) {
    el.style.whiteSpace = 'nowrap';
    var range = document.createRange();
    range.selectNodeContents(el);
    var gap = el.clientWidth - range.getBoundingClientRect().width;
    el.style.letterSpacing = gap / (el.textContent.length - 1) + 'px';
  });
});
</script>
</body>
</html>
